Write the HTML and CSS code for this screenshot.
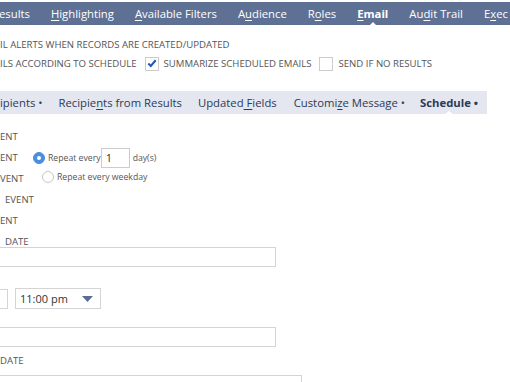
FILE: index.html
```html
<!DOCTYPE html>
<html>
<head>
<meta charset="utf-8">
<link rel="stylesheet" href="styles.css">
</head>
<body>
<nav class="topbar">
  <span class="nav-item first">esults</span>
  <span class="nav-item"><u>H</u>ighlighting</span>
  <span class="nav-item"><u>A</u>vailable Filters</span>
  <span class="nav-item">A<u>u</u>dience</span>
  <span class="nav-item">R<u>o</u>les</span>
  <span class="nav-item active"><u>E</u>mail</span>
  <span class="nav-item">Au<u>d</u>it Trail</span>
  <span class="nav-item">E<u>x</u>ec</span>
</nav>

<section class="options">
  <div class="opt-line">IL ALERTS WHEN RECORDS ARE CREATED/UPDATED</div>
  <div class="opt-line">
    <span>ILS ACCORDING TO SCHEDULE</span>
    <span class="checkbox checked"><svg viewBox="0 0 13 13" width="13" height="13"><path d="M2.5 6.5 L5.2 9.2 L10.5 3" fill="none" stroke="#2456b8" stroke-width="2.2"/></svg></span>
    <span>SUMMARIZE SCHEDULED EMAILS</span>
    <span class="checkbox"></span>
    <span>SEND IF NO RESULTS</span>
  </div>
</section>

<nav class="subtabs">
  <span class="subtab first">ipients •</span>
  <span class="subtab">Recipie<u>n</u>ts from Results</span>
  <span class="subtab">Updated<u> F</u>ields</span>
  <span class="subtab">Customi<u>z</u>e Message •</span>
  <span class="subtab active">Schedule •</span>
</nav>

<section class="schedule">
  <div class="event-grid">
    <div class="lbl">ENT</div><div></div>
    <div class="lbl">ENT</div>
    <div class="radio-row">
      <span class="radio on"></span>
      <span>Repeat every</span>
      <span class="num-input">1</span>
      <span class="unit">day(s)</span>
    </div>
    <div class="lbl">VENT</div>
    <div class="radio-row second">
      <span class="radio"></span>
      <span>Repeat every weekday</span>
    </div>
    <div class="lbl indent">EVENT</div><div></div>
    <div class="lbl">ENT</div><div></div>
    <div class="lbl indent">DATE</div><div></div>
  </div>
  <div class="text-input wide first-input"></div>
  <div class="time-row">
    <span class="text-input stub"></span>
    <span class="select">11:00 pm<svg class="caret" viewBox="0 0 11 6" width="11" height="6"><path d="M0 0 H11 L5.5 6 Z" fill="#5b6e92"/></svg></span>
  </div>
  <div class="text-input wide second-input"></div>
  <div class="lbl end-date">DATE</div>
  <div class="text-input last-input"></div>
</section>
</body>
</html>
```

FILE: styles.css
```css
html, body {
  margin: 0;
  padding: 0;
  background: #ffffff;
  overflow: hidden;
}
body {
  width: 510px;
  height: 382px;
  font-family: "Open Sans", "Liberation Sans", sans-serif;
  color: #555;
}
u { text-decoration: underline; text-underline-offset: 2px; text-decoration-thickness: 1px; }

.topbar {
  margin-top: 2px;
  height: 23px;
  background: #5e7195;
  display: flex;
  align-items: center;
  gap: 21px;
  color: #fff;
  font-size: 11.3px;
  white-space: nowrap;
  overflow: hidden;
}
.nav-item.first { margin-left: -1px; }
.nav-item.active {
  font-weight: 700;
  position: relative;
}
.nav-item.active::after {
  content: "";
  position: absolute;
  left: 50%;
  bottom: -6px;
  margin-left: -5px;
  border-left: 5px solid transparent;
  border-right: 5px solid transparent;
  border-bottom: 5px solid #fff;
}

.options {
  padding-top: 10px;
  font-size: 9.6px;
  color: #555;
}
.opt-line {
  height: 19px;
  display: flex;
  align-items: center;
  gap: 5px;
  white-space: nowrap;
}
.checkbox {
  width: 12px;
  height: 12px;
  border: 1px solid #ccc;
  background: #fff;
  margin-left: 3px;
  display: inline-flex;
  align-items: center;
  justify-content: center;
}
.checkbox svg { display: block; }

.subtabs {
  margin-top: 18px;
  width: 487px;
  height: 23px;
  background: #e4e7ef;
  display: flex;
  align-items: center;
  gap: 17px;
  font-size: 11.3px;
  color: #2c3a57;
  white-space: nowrap;
}
.subtab:nth-child(2) { margin-left: -1px; }
.subtab:nth-child(3) { margin-left: -1px; }
.subtab:nth-child(5) { margin-left: -2px; }
.subtab.active {
  font-weight: 700;
  position: relative;
}
.subtab.active::after {
  content: "";
  position: absolute;
  left: 50%;
  bottom: -6px;
  margin-left: -6px;
  border-left: 6px solid transparent;
  border-right: 6px solid transparent;
  border-bottom: 5px solid #fff;
}

.schedule {
  padding-top: 12px;
  font-size: 9.6px;
  color: #555;
}
.event-grid {
  display: grid;
  grid-template-columns: 33px 1fr;
  grid-auto-rows: 21px;
  align-items: center;
}
.lbl { white-space: nowrap; }
.lbl.indent { padding-left: 5px; }
.radio-row {
  display: flex;
  align-items: center;
  gap: 3px;
  font-size: 8.7px;
  color: #555;
  white-space: nowrap;
}
.radio-row.second { padding-left: 9px; margin-top: -3px; }
.radio {
  width: 10px;
  height: 10px;
  border-radius: 50%;
  border: 1px solid #c8c8c8;
  background: #fff;
  box-sizing: content-box;
  flex: none;
}
.radio.on {
  background: #4a8ee0;
  border-color: #4a8ee0;
  position: relative;
}
.radio.on::after {
  content: "";
  position: absolute;
  left: 3px; top: 3px;
  width: 4px; height: 4px;
  border-radius: 50%;
  background: #fff;
}
.num-input {
  width: 23px;
  height: 18px;
  border: 1px solid #ccc;
  padding-left: 4px;
  font-size: 11px;
  color: #333;
  display: flex;
  align-items: center;
  margin-left: -3px;
  box-sizing: content-box;
}
.unit { margin-left: 0; }

.text-input {
  display: block;
  border: 1px solid #d4d4d4;
  height: 18px;
  background: #fff;
}
.text-input.wide {
  width: 280px;
  margin-left: -6px;
}
.first-input { margin-top: -5px; }
.time-row {
  margin-top: 21px;
  display: flex;
  align-items: center;
  gap: 7px;
}
.text-input.stub {
  width: 20px;
  margin-left: -14px;
}
.select {
  width: 86px;
  height: 21px;
  border: 1px solid #d4d4d4;
  display: flex;
  align-items: center;
  justify-content: space-between;
  padding: 0 4px 0 4px;
  box-sizing: border-box;
  font-size: 11px;
  color: #333;
}
.caret { display: block; margin-right: 3px; }
.second-input { margin-top: 18px; }
.end-date {
  height: 26px;
  display: flex;
  align-items: center;
}
.last-input {
  width: 306px;
  margin-left: -6px;
  margin-top: 2px;
}
```
